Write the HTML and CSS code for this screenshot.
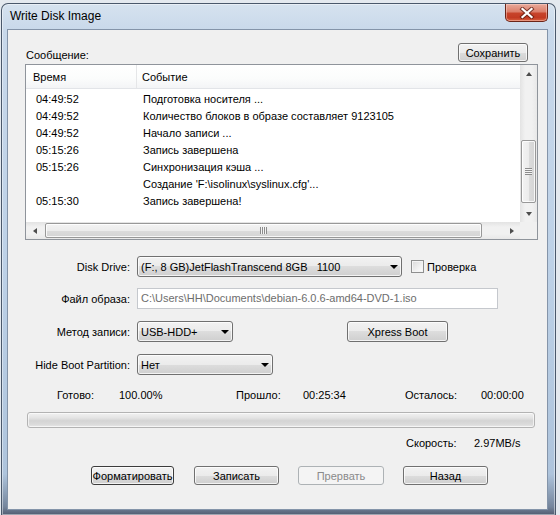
FILE: index.html
```html
<!DOCTYPE html>
<html lang="ru">
<head>
<meta charset="utf-8">
<title>Write Disk Image</title>
<link rel="stylesheet" href="styles.css">
</head>
<body>
<div class="window">
  <div class="titlebar">
    <span class="title">Write Disk Image</span>
    <div class="close">
      <svg width="16" height="12" viewBox="0 0 16 12">
        <path d="M3.5 2 L12.5 10 M12.5 2 L3.5 10" stroke="#5b1a10" stroke-width="4.2" stroke-linecap="square" opacity="0.75"/>
        <path d="M3.5 2 L12.5 10 M12.5 2 L3.5 10" stroke="#ffffff" stroke-width="2.3" stroke-linecap="square"/>
      </svg>
    </div>
  </div>
  <div class="client">
    <div class="msg-head">
      <span>Сообщение:</span>
      <button class="btn save">Сохранить</button>
    </div>
    <div class="list">
      <div class="list-content">
        <div class="lhead">
          <div class="h1">Время</div>
          <div class="h2">Событие</div>
        </div>
        <div class="rows">
          <div class="row"><span class="t">04:49:52</span><span>Подготовка носителя ...</span></div>
          <div class="row"><span class="t">04:49:52</span><span>Количество блоков в образе составляет 9123105</span></div>
          <div class="row"><span class="t">04:49:52</span><span>Начало записи ...</span></div>
          <div class="row"><span class="t">05:15:26</span><span>Запись завершена</span></div>
          <div class="row"><span class="t">05:15:26</span><span>Синхронизация кэша ...</span></div>
          <div class="row"><span class="t"></span><span>Создание 'F:\isolinux\syslinux.cfg'...</span></div>
          <div class="row"><span class="t">05:15:30</span><span>Запись завершена!</span></div>
        </div>
      </div>
      <div class="vs">
        <div class="sbtn"><i class="ar up"></i></div>
        <div class="vgap1"></div>
        <div class="vthumb"><i class="grip-h"></i></div>
        <div class="vgap2"></div>
        <div class="sbtn"><i class="ar down"></i></div>
      </div>
      <div class="hs">
        <div class="sbtn"><i class="ar left"></i></div>
        <div class="hgap1"></div>
        <div class="hthumb"><i class="grip-v"></i></div>
        <div class="hgap2"></div>
        <div class="sbtn"><i class="ar right"></i></div>
      </div>
      <div class="corner"></div>
    </div>

    <div class="form">
      <div class="frow">
        <span class="lbl">Disk Drive:</span>
        <div class="combo w-drive"><span>(F:, 8 GB)JetFlashTranscend 8GB&nbsp;&nbsp; 1100</span><i class="carr"></i></div>
        <span class="chk"></span><span class="chk-lbl">Проверка</span>
      </div>
      <div class="frow r2">
        <span class="lbl">Файл образа:</span>
        <div class="textbox">C:\Users\HH\Documents\debian-6.0.6-amd64-DVD-1.iso</div>
      </div>
      <div class="frow r3">
        <span class="lbl">Метод записи:</span>
        <div class="combo w-method"><span>USB-HDD+</span><i class="carr"></i></div>
        <button class="btn xpress">Xpress Boot</button>
      </div>
      <div class="frow r4">
        <span class="lbl">Hide Boot Partition:</span>
        <div class="combo w-hide"><span>Нет</span><i class="carr"></i></div>
      </div>
    </div>

    <div class="stats">
      <span>Готово:</span><span>100.00%</span><span>Прошло:</span><span>00:25:34</span><span>Осталось:</span><span>00:00:00</span>
    </div>
    <div class="progress"></div>
    <div class="speed"><span>Скорость:</span><span>2.97MB/s</span></div>

    <div class="buttons">
      <button class="btn b-format">Форматировать</button>
      <button class="btn b-write">Записать</button>
      <button class="btn b-abort" disabled>Прервать</button>
      <button class="btn b-back">Назад</button>
    </div>
  </div>
</div>
</body>
</html>
```

FILE: styles.css
```css
* { box-sizing: border-box; }
html, body { margin: 0; padding: 0; }
body {
  width: 560px;
  height: 515px;
  overflow: hidden;
  background: #e4e9ef;
  font-family: "Liberation Sans", Arial, sans-serif;
  font-size: 11px;
  color: #000;
}

.window {
  margin: 3px 0 0 1px;
  width: 555px;
  height: 512px;
  border: 1px solid #4a586b;
  border-bottom: none;
  border-radius: 7px 7px 0 0;
  padding: 0 8px 6px 6px;
  background: linear-gradient(180deg, #d6e2ef 0px, #c8d8ea 28px, #bdd1e7 260px, #aec4dc 470px, #74859c 503px, #4c566a 512px);
  box-shadow: inset 0 0 0 1px rgba(255,255,255,0.45);
  display: flex;
  flex-direction: column;
}

.titlebar {
  height: 26px;
  display: flex;
  justify-content: space-between;
  align-items: flex-start;
}
.title {
  font-size: 12px;
  line-height: 15px;
  margin: 5px 0 0 2px;
  color: #000;
}
.close {
  width: 43px;
  height: 18px;
  margin-right: -1px;
  border: 1px solid #6b2418;
  border-top: none;
  border-radius: 0 0 5px 5px;
  background: linear-gradient(180deg, #e9a99a 0%, #dc7f6b 45%, #c7432a 55%, #c23a22 80%, #d8603f 100%);
  box-shadow: inset 0 0 0 1px rgba(255,220,210,0.45);
  display: flex;
  align-items: center;
  justify-content: center;
}

.client {
  flex: 1;
  background: #f0f0f0;
  box-shadow: 0 0 0 1px #8494a9;
}

/* message header */
.msg-head {
  display: flex;
  justify-content: space-between;
  align-items: flex-end;
  margin: 13px 19px 0 18px;
  height: 19px;
}
.msg-head span { line-height: 13px; }

.btn {
  font-family: inherit;
  font-size: 11px;
  color: #000;
  height: 19px;
  padding: 0;
  border: 1px solid #707070;
  border-radius: 3px;
  background: linear-gradient(180deg, #f2f2f2 0%, #ebebeb 50%, #dddddd 50%, #cfcfcf 100%);
  box-shadow: inset 0 0 0 1px rgba(255,255,255,0.75);
}
.btn:disabled {
  color: #8a8a8a;
  border-color: #adb2b5;
  background: #f4f4f4;
  box-shadow: none;
}
.save { width: 70px; }

/* list view */
.list {
  margin: 2px 0 0 17px;
  width: 513px;
  height: 176px;
  border: 1px solid #8f949b;
  background: #fff;
  display: grid;
  grid-template-columns: 494px 17px;
  grid-template-rows: 157px 17px;
}
.list-content { overflow: hidden; }
.lhead {
  display: flex;
  height: 24px;
  border-bottom: 1px solid #e2e4e8;
  background: linear-gradient(180deg, #ffffff 0%, #fbfcfc 60%, #f3f4f6 100%);
}
.lhead div {
  padding-top: 2px;
  line-height: 21px;
}
.h1 {
  width: 111px;
  padding-left: 7px;
  border-right: 1px solid #e5e6e8;
}
.h2 { padding-left: 5px; }
.rows { padding-top: 2px; }
.row {
  display: flex;
  height: 17px;
  line-height: 17px;
  white-space: nowrap;
}
.row .t {
  width: 117px;
  padding-left: 10px;
  flex: none;
}

/* scrollbars */
.vs, .hs { display: flex; }
.vs {
  flex-direction: column;
  background: linear-gradient(90deg, #e3e3e3 0%, #f1f1f1 30%, #f1f1f1 70%, #e8e8e8 100%);
}
.hs {
  background: linear-gradient(180deg, #e3e3e3 0%, #f1f1f1 30%, #f1f1f1 70%, #e8e8e8 100%);
}
.sbtn {
  width: 17px;
  height: 17px;
  flex: none;
  display: flex;
  align-items: center;
  justify-content: center;
}
.ar { display: block; width: 0; height: 0; }
.ar.up { border-left: 3.5px solid transparent; border-right: 3.5px solid transparent; border-bottom: 4px solid #4d4d4d; }
.ar.down { border-left: 3.5px solid transparent; border-right: 3.5px solid transparent; border-top: 4px solid #4d4d4d; }
.ar.left { border-top: 3.5px solid transparent; border-bottom: 3.5px solid transparent; border-right: 4px solid #4d4d4d; }
.ar.right { border-top: 3.5px solid transparent; border-bottom: 3.5px solid transparent; border-left: 4px solid #4d4d4d; }

.vgap1 { height: 58px; flex: none; }
.vgap2 { height: 2px; flex: none; }
.hgap1 { width: 2px; flex: none; }
.hgap2 { width: 21px; flex: none; }

.vthumb, .hthumb {
  flex: none;
  border: 1px solid #989898;
  border-radius: 2px;
  display: flex;
  align-items: center;
  justify-content: center;
  box-shadow: inset 0 0 0 1px rgba(255,255,255,0.8);
}
.vthumb {
  height: 63px;
  width: 15px;
  margin-left: 1px;
  background: linear-gradient(90deg, #f3f3f3 0%, #ececec 50%, #dcdcdc 51%, #d4d4d4 100%);
}
.hthumb {
  width: 437px;
  height: 15px;
  margin-top: 1px;
  background: linear-gradient(180deg, #f3f3f3 0%, #ececec 50%, #dcdcdc 51%, #d4d4d4 100%);
}
.grip-h {
  display: block;
  width: 7px;
  height: 7px;
  background: repeating-linear-gradient(180deg, #8c8c8c 0 1px, #f4f4f4 1px 2px);
}
.grip-v {
  display: block;
  width: 7px;
  height: 7px;
  background: repeating-linear-gradient(90deg, #8c8c8c 0 1px, #f4f4f4 1px 2px);
}
.corner { background: #f0f0f0; }

/* form */
.form { margin-top: 16px; }
.frow {
  display: flex;
  align-items: center;
  height: 21px;
}
.r2 { margin-top: 11px; }
.r3 { margin-top: 12px; }
.r4 { margin-top: 12px; }
.lbl {
  width: 122px;
  margin-right: 7px;
  text-align: right;
  flex: none;
}
.combo {
  height: 21px;
  border: 1px solid #707070;
  border-radius: 3px;
  background: linear-gradient(180deg, #f2f2f2 0%, #ebebeb 50%, #dddddd 50%, #cfcfcf 100%);
  box-shadow: inset 0 0 0 1px rgba(255,255,255,0.75);
  display: flex;
  align-items: center;
  justify-content: space-between;
  padding: 0 3px 0 3px;
  white-space: nowrap;
  flex: none;
}
.carr {
  display: block;
  width: 0;
  height: 0;
  border-left: 4px solid transparent;
  border-right: 4px solid transparent;
  border-top: 4px solid #000;
}
.w-drive { width: 265px; }
.w-method { width: 96px; }
.w-hide { width: 136px; }

.chk {
  width: 13px;
  height: 13px;
  margin-left: 9px;
  border: 1px solid #8e8f8f;
  background: linear-gradient(135deg, #d9d9d9 0%, #f1f1f1 60%, #ffffff 100%);
  box-shadow: inset 0 0 0 1px #f4f4f4;
  flex: none;
}
.chk-lbl { margin-left: 3px; }

.textbox {
  width: 361px;
  height: 21px;
  border: 1px solid #c5c8cd;
  background: #fff;
  color: #6d6d6d;
  padding-left: 3px;
  line-height: 19px;
  white-space: nowrap;
}
.xpress {
  width: 101px;
  height: 21px;
  margin-left: 114px;
}

/* stats */
.stats {
  margin-top: 14px;
  padding-left: 49px;
  display: grid;
  grid-template-columns: 62px 117px 67px 102px 76px auto;
  line-height: 13px;
}
.progress {
  margin: 10px 0 0 19px;
  width: 508px;
  height: 16px;
  border: 1px solid #b3b3b3;
  border-radius: 3px;
  background: linear-gradient(180deg, #f2f2f2 0%, #e4e4e4 35%, #d4d4d4 55%, #dadada 80%, #e8e8e8 100%);
  box-shadow: inset 0 0 0 1px rgba(255,255,255,0.6);
}
.speed {
  margin-top: 9px;
  padding-left: 398px;
  display: grid;
  grid-template-columns: 68px auto;
  line-height: 13px;
}

/* buttons */
.buttons {
  margin-top: 16px;
  padding-left: 83px;
  display: flex;
}
.b-format { width: 83px; border-color: #3c3c3c; }
.b-write { width: 85px; margin-left: 20px; }
.b-abort { width: 86px; margin-left: 19px; }
.b-back { width: 85px; margin-left: 19px; }
```
